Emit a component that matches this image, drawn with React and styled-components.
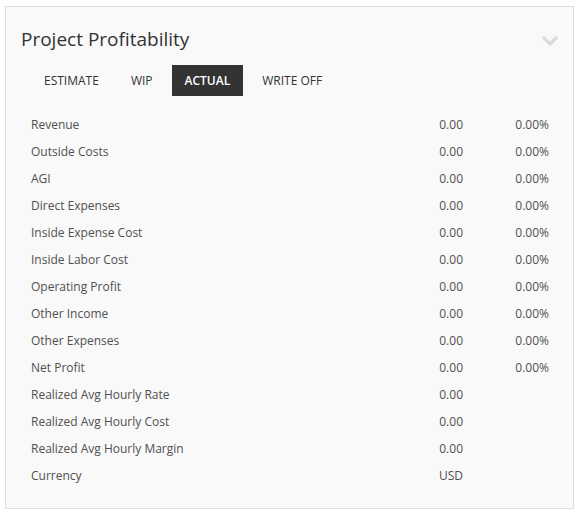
import React, { useState } from "react"
import styled, { createGlobalStyle } from "styled-components"

const GlobalStyle = createGlobalStyle`
  html, body {
    margin: 0;
    padding: 0;
    background: #ffffff;
    font-family: "Open Sans", "Liberation Sans", sans-serif;
  }
`

const tabs = ["Estimate", "WIP", "Actual", "Write Off"]

const rows = [
  ["Revenue", "0.00", "0.00%"],
  ["Outside Costs", "0.00", "0.00%"],
  ["AGI", "0.00", "0.00%"],
  ["Direct Expenses", "0.00", "0.00%"],
  ["Inside Expense Cost", "0.00", "0.00%"],
  ["Inside Labor Cost", "0.00", "0.00%"],
  ["Operating Profit", "0.00", "0.00%"],
  ["Other Income", "0.00", "0.00%"],
  ["Other Expenses", "0.00", "0.00%"],
  ["Net Profit", "0.00", "0.00%"],
  ["Realized Avg Hourly Rate", "0.00", ""],
  ["Realized Avg Hourly Cost", "0.00", ""],
  ["Realized Avg Hourly Margin", "0.00", ""],
  ["Currency", "USD", ""],
]

const Chevron = () => (
  <svg width="16" height="10" viewBox="0 0 16 10">
    <polyline
      points="2,2 8,8 14,2"
      fill="none"
      stroke="#dadada"
      strokeWidth="3.2"
      strokeLinecap="round"
      strokeLinejoin="round"
    />
  </svg>
)

const App = () => {
  const [active, setActive] = useState("Actual")

  return (
    <Page>
      <GlobalStyle />
      <Card>
        <Header>
          <Title>Project Profitability</Title>
          <Toggle>
            <Chevron />
          </Toggle>
        </Header>
        <Tabs>
          {tabs.map((t) => (
            <Tab key={t} $active={t === active} onClick={() => setActive(t)}>
              {t}
            </Tab>
          ))}
        </Tabs>
        <Table>
          {rows.map(([label, value, pct]) => (
            <Row key={label}>
              <Label>{label}</Label>
              <Value>{value}</Value>
              <Value>{pct}</Value>
            </Row>
          ))}
        </Table>
      </Card>
    </Page>
  )
}

export default App

const Page = styled.div`
  padding: 6px 10px 0 5px;
`

const Card = styled.div`
  width: 569px;
  box-sizing: border-box;
  background: #f9f9f9;
  border: 1px solid #dddddd;
  padding: 20px 15px 19px 15px;
`

const Header = styled.div`
  display: flex;
  align-items: flex-start;
  justify-content: space-between;
`

const Title = styled.h2`
  margin: 0;
  font-size: 19px;
  line-height: 24px;
  font-weight: 400;
  color: #333333;
`

const Toggle = styled.div`
  display: flex;
  padding-top: 9px;
`

const Tabs = styled.div`
  display: flex;
  gap: 6px;
  margin: 14px 0 0 10px;
`

const Tab = styled.div`
  padding: 7px 13px;
  font-size: 12px;
  line-height: 17px;
  text-transform: uppercase;
  cursor: pointer;
  color: ${(p) => (p.$active ? "#ffffff" : "#333333")};
  background: ${(p) => (p.$active ? "#333333" : "transparent")};
  font-weight: ${(p) => (p.$active ? 600 : 400)};
`

const Table = styled.div`
  margin-top: 15px;
  padding: 0 9px 0 10px;
`

const Row = styled.div`
  display: grid;
  grid-template-columns: 1fr 80px 86px;
  height: 27px;
  align-items: center;
  font-size: 12px;
  color: #505050;
`

const Label = styled.div``

const Value = styled.div`
  text-align: right;
`
